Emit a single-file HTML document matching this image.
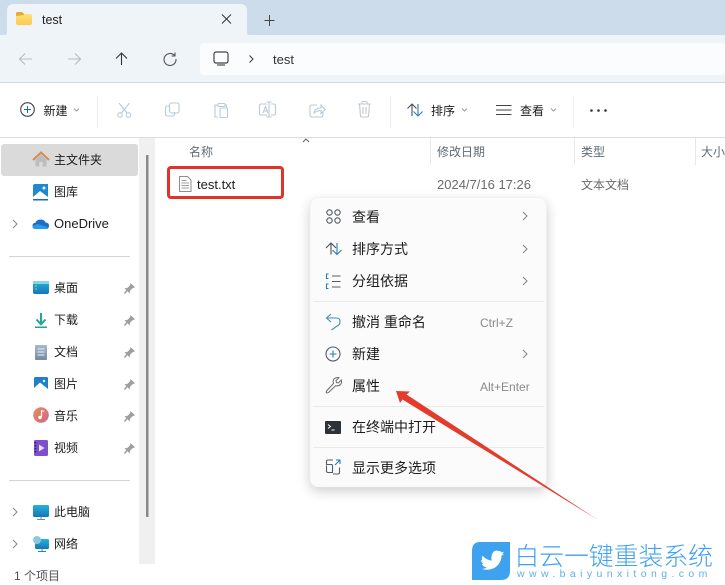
<!DOCTYPE html>
<html><head><meta charset="utf-8"><style>
html,body{margin:0;padding:0;background:#fff;width:725px;height:585px;overflow:hidden}
svg{display:block;font-family:"Liberation Sans","Noto Sans CJK SC",sans-serif}
.s{font-size:12px;fill:#1c1c1c}
.m{font-size:14px;fill:#1c1c1c}
.h{font-size:12px;fill:#5f6b75}
.g{font-size:12px;fill:#6b6b6b}
.k{font-size:12px;fill:#8a8a8a}
.dis{fill:none;stroke:#b9cbd9;stroke-width:1.1}
</style></head><body>
<svg width="725" height="585" viewBox="0 0 725 585" xmlns="http://www.w3.org/2000/svg">
<defs>
<filter id="sh" x="-15%" y="-15%" width="130%" height="130%"><feGaussianBlur stdDeviation="6"/></filter>
<linearGradient id="fo" x1="0" y1="0" x2="0" y2="1"><stop offset="0" stop-color="#ffe38a"/><stop offset="1" stop-color="#fbc94e"/></linearGradient>
<linearGradient id="bl" x1="0" y1="0" x2="0" y2="1"><stop offset="0" stop-color="#27b3d8"/><stop offset="1" stop-color="#1476b8"/></linearGradient>
<linearGradient id="mu" x1="0" y1="0" x2="1" y2="1"><stop offset="0" stop-color="#ee8f55"/><stop offset="1" stop-color="#c9658f"/></linearGradient>
<linearGradient id="doc" x1="0" y1="0" x2="0" y2="1"><stop offset="0" stop-color="#a9bace"/><stop offset="1" stop-color="#74889f"/></linearGradient>
<g id="pin"><path d="M130.500 283l4.500 4.300-2.300.8-2.700 2.700-.3 2.700-5.200-5.200 2.800-.3 2.700-2.700z" fill="#9a9fa5"/><path d="M127 290.500l-2.500 3" stroke="#9a9fa5" stroke-width="1.500" fill="none"/></g>
<path id="chev" d="M0 0l4 4-4 4" fill="none" stroke="#8a8a8a" stroke-width="1.100"/>
</defs>

<!-- title strip -->
<rect width="725" height="35" fill="#cddcea"/>
<path d="M5 35q2 0 2-3V11q0-7 7-7h226q7 0 7 7v21q0 3 2 3z" fill="#eff4f9"/>
<path d="M16 14q0-2 2-2h4l2 2h6q2 0 2 2v7q0 2-2 2H18q-2 0-2-2z" fill="url(#fo)"/>
<path d="M16 16v-2q0-2 2-2h4l2 2v1z" fill="#e8a92d"/>
<text x="42" y="24" font-size="12.500" fill="#222">test</text>
<path d="M222 14.500l9 9m0-9l-9 9" stroke="#333" stroke-width="1" fill="none"/>
<path d="M269.500 15v11M264.500 20.500h10" stroke="#444" stroke-width="1" fill="none"/>

<!-- nav bar -->
<rect y="35" width="725" height="47" fill="#eff4f9"/>
<rect y="82" width="725" height="1" fill="#d2dae1"/>
<rect x="200" y="43" width="525" height="32" rx="4" fill="#fbfcfe"/>
<path d="M32 59H20M25 53.500L19.500 59l5.500 5.500" fill="none" stroke="#b5bcc3" stroke-width="1.100"/>
<path d="M68 59h12M75 53.500l5.500 5.500-5.500 5.500" fill="none" stroke="#b5bcc3" stroke-width="1.100"/>
<path d="M121.500 65V53M116 58.500l5.500-5.500 5.500 5.500" fill="none" stroke="#333" stroke-width="1.100"/>
<path d="M174.500 55.500a6 6 0 1 0 1.500 3.500M175 52.500v3.500h-3.500" fill="none" stroke="#555" stroke-width="1.100"/>
<rect x="214" y="52" width="14" height="11" rx="2" fill="none" stroke="#444" stroke-width="1.200"/>
<path d="M217 65h8" stroke="#777" stroke-width="1.600"/>
<path d="M249.500 55.500l3.500 3.500-3.500 3.500" fill="none" stroke="#444" stroke-width="1.100"/>
<text x="273" y="64" font-size="13" fill="#333">test</text>

<!-- toolbar -->
<circle cx="27.500" cy="109.500" r="6.800" fill="none" stroke="#3e464d" stroke-width="1.100"/>
<path d="M27.500 106v7M24 109.500h7" stroke="#1a6fb0" stroke-width="1.100"/>
<text x="43.500" y="115" class="s">新建</text>
<path d="M74 108.500l2.500 2.500 2.500-2.500" fill="none" stroke="#9a9a9a" stroke-width="1"/>
<rect x="97" y="96" width="1" height="32" fill="#eceff2"/>
<g class="dis">
<path d="M119 103l8 10M129.500 103l-8 10"/><circle cx="120" cy="115" r="2.300"/><circle cx="128.500" cy="115" r="2.300"/>
<path d="M169.500 106h-2q-2 0-2 2v6q0 2 2 2h5q2 0 2-2v-2"/><rect x="169.500" y="103" width="9.500" height="10" rx="2"/>
<path d="M218 105h-3v12h3M225 105h1.500v3"/><rect x="218" y="103.500" width="7" height="3" rx="1"/><rect x="220" y="108" width="7.500" height="9.500" rx="1"/>
<path d="M267 104h-6q-1.500 0-1.500 1.500v8q0 1.500 1.500 1.500h6M271 104h3q1.500 0 1.500 1.500v8q0 1.500-1.500 1.500h-3M269 102v15M266.500 102h5M266.500 117h5"/>
<path d="M263 113l2.500-6.500 2.500 6.500M264 111h3"/>
<path d="M317 105h-5q-2 0-2 2v8q0 2 2 2h9q2 0 2-2v-3"/><path d="M314 113q1-5 7-5v-3l4 4.500-4 4v-3q-4 0-7 2.500z"/>
<path d="M358 104h13M362 104v-1.500q0-1 1-1h3q1 0 1 1V104M359.500 104l1 12q0 1 1.500 1h5q1.500 0 1.500-1l1-12M363 107v7M366 107v7" stroke="#c2c8cd"/>
</g>
<rect x="390" y="96" width="1" height="32" fill="#eceff2"/>
<path d="M412 116V104M407.500 108.500l4.500-4.500 4.500 4.500" fill="none" stroke="#4a5056" stroke-width="1.100"/>
<path d="M418 104v12M413.500 111.500l4.500 4.500 4.500-4.500" fill="none" stroke="#2e7fb8" stroke-width="1.100"/>
<text x="431" y="115" class="s">排序</text>
<path d="M462 108.500l2.500 2.500 2.500-2.500" fill="none" stroke="#9a9a9a" stroke-width="1"/>
<path d="M496 105.500h15.500M496 110h15.500M496 114.500h15.500" stroke="#444" stroke-width="1"/>
<text x="520" y="115" class="s">查看</text>
<path d="M551 108.500l2.500 2.500 2.500-2.500" fill="none" stroke="#9a9a9a" stroke-width="1"/>
<rect x="573" y="96" width="1" height="32" fill="#eceff2"/>
<circle cx="591.500" cy="110.500" r="1.300" fill="#333"/><circle cx="598.500" cy="110.500" r="1.300" fill="#333"/><circle cx="605.500" cy="110.500" r="1.300" fill="#333"/>
<rect y="137" width="725" height="1" fill="#d8dde2"/>

<!-- sidebar -->
<rect x="1" y="144" width="137" height="32" rx="3" fill="#dadada"/>
<rect x="139" y="138" width="16" height="426" fill="#f0f0f0"/>
<rect x="146" y="155" width="2.500" height="362" fill="#8a8a8a"/>

<path d="M33 160l8-7.500 8 7.500" fill="none" stroke="#d98b4b" stroke-width="2"/>
<path d="M35.500 159.500v7h3.800v-4.500h3.400v4.500h3.800v-7l-5.500-5z" fill="#b9bec4"/>
<text x="54" y="164" class="s">主文件夹</text>

<path d="M33 186q0-2 2-2h13v15H35q-2 0-2-2z" fill="#1e88d2"/>
<path d="M33 197l7-6 8 6v2H35q-2 0-2-2z" fill="#fff"/><path d="M33 199h15v1.500H33z" fill="#1a6ea8"/>
<circle cx="44" cy="188" r="1.500" fill="#fff"/>
<text x="54" y="196" class="s">图库</text>

<use href="#chev" x="13" y="220"/>
<path d="M36 229q-3.500 0-3.500-3t3-3.200q1-3.300 5-3.300t5 3q3.500 0 3.500 3.300t-3 3.200z" fill="#1a6fc4"/>
<path d="M36 229q-3.500 0-3.500-3l5-2 10 3-1 2z" fill="#2a9be6"/>
<text x="54" y="228" font-size="13" fill="#1c1c1c">OneDrive</text>

<rect x="9" y="256" width="121" height="1" fill="#d5d5d5"/>

<rect x="33" y="281" width="16" height="13" rx="2" fill="url(#bl)"/>
<rect x="33" y="281" width="16" height="3" fill="#8bd3e8"/>
<path d="M35.500 286h1M35.500 289h1" stroke="#dff" stroke-width="1"/>
<text x="54" y="292" class="s">桌面</text>
<use href="#pin"/>

<path d="M41 313v11M36.500 319.500l4.500 4.800 4.500-4.800" fill="none" stroke="#1fa88c" stroke-width="2"/>
<rect x="35" y="326.500" width="12" height="1.500" fill="#1fa88c"/>
<text x="54" y="324" class="s">下载</text>
<use href="#pin" y="32"/>

<rect x="35" y="345" width="12" height="15" rx="1" fill="url(#doc)"/>
<path d="M37.500 349h7M37.500 352h7M37.500 355h7" stroke="#eef" stroke-width="1"/>
<text x="54" y="356" class="s">文档</text>
<use href="#pin" y="64"/>

<rect x="34" y="377" width="14" height="14" rx="1.500" fill="#1e80cc"/>
<path d="M34 388l6-5.500 8 6.500v2H34z" fill="#fff"/><circle cx="44" cy="381" r="1.200" fill="#fff"/>
<text x="54" y="388" class="s">图片</text>
<use href="#pin" y="96"/>

<circle cx="41" cy="415" r="7.800" fill="url(#mu)"/>
<path d="M41.500 410.500v6.500" stroke="#fff" stroke-width="1.200"/><circle cx="40" cy="417.500" r="1.700" fill="#fff"/><path d="M41.500 410.500l2.500 1" stroke="#fff" stroke-width="1.200"/>
<text x="54" y="420" class="s">音乐</text>
<use href="#pin" y="128"/>

<rect x="34" y="440" width="14" height="16" rx="1.500" fill="#7f4fc9"/>
<path d="M39 444.500l5.500 3.500-5.500 3.500z" fill="#e9ddff"/>
<path d="M35.500 442v12" stroke="#2f1c5c" stroke-width="1.400" stroke-dasharray="1.500 1.500"/>
<text x="54" y="452" class="s">视频</text>
<use href="#pin" y="160"/>

<rect x="9" y="480" width="121" height="1" fill="#d5d5d5"/>

<use href="#chev" x="13" y="508"/>
<rect x="33" y="505" width="16" height="12" rx="1.500" fill="url(#bl)"/>
<path d="M41 517v2.500M37 519.500h8" stroke="#6f8ea5" stroke-width="1"/>
<text x="54" y="516" class="s">此电脑</text>

<use href="#chev" x="13" y="540"/>
<rect x="35" y="539" width="14" height="10" rx="1.500" fill="url(#bl)"/>
<circle cx="37" cy="540" r="4" fill="#8fc7e0"/>
<path d="M42 549v2M38 551.500h8" stroke="#3b7fa5" stroke-width="1"/>
<text x="54" y="548" class="s">网络</text>

<text x="14" y="580" class="h" style="fill:#4d5257">1 个项目</text>

<!-- header row -->
<text x="189" y="156" class="h">名称</text>
<path d="M303 142l3-3 3 3" fill="none" stroke="#666" stroke-width="1"/>
<rect x="430" y="138" width="1" height="27" fill="#e6e9ec"/>
<rect x="574" y="138" width="1" height="27" fill="#e6e9ec"/>
<rect x="695" y="138" width="1" height="27" fill="#e6e9ec"/>
<text x="437" y="156" class="h">修改日期</text>
<text x="581" y="156" class="h">类型</text>
<text x="701" y="156" class="h">大小</text>

<!-- file row -->
<path d="M179.500 176.500h8l3.500 3.500v11.500h-11.500z" fill="#fbfbfb" stroke="#8f8f8f" stroke-width="1"/>
<path d="M181.500 180.500h5M181.500 183h7.500M181.500 185.500h7.500M181.500 188h7.500" stroke="#a0a0a0" stroke-width="1"/>
<text x="197" y="189" font-size="13" fill="#1c1c1c">test.txt</text>
<rect x="168.500" y="167.500" width="114" height="30" rx="2.500" fill="none" stroke="#e0342b" stroke-width="3"/>
<text x="437" y="189" font-size="13" fill="#6b6b6b">2024/7/16 17:26</text>
<text x="581" y="189" class="g">文本文档</text>

<!-- context menu -->
<rect x="310" y="202" width="237" height="289" rx="8" fill="#000" opacity=".2" filter="url(#sh)"/>
<rect x="310" y="197.500" width="236.500" height="289.500" rx="8" fill="#fbfbfc" stroke="#eceef0" stroke-width=".6"/>

<g fill="none" stroke="#555c63" stroke-width="1.100">
<circle cx="329.500" cy="212.500" r="2.700"/><circle cx="337.500" cy="212.500" r="2.700"/><circle cx="329.500" cy="220.500" r="2.700"/><circle cx="337.500" cy="220.500" r="2.700"/>
<path d="M331 254.500v-11M326 248l5-5 5 5" stroke="#4a5056"/>
<path d="M337 243v11.500M332.500 250l4.500 4.500 4.500-4.500" stroke="#2e7fb8"/>
<path d="M332 276h8.500M332 281.500h8.500M332 287h8.500"/>
<path d="M328.500 274h-2v4.500h2M328.500 284h-2v4.500h2" stroke="#2e7fb8"/>
<path d="M327 318h9.500q3.500 0 3.500 3.500t-3 4.500l-5.500 4" stroke="#3f8fb8"/>
<path d="M331 314l-4.500 4 4.500 4" stroke="#3f8fb8"/>
<circle cx="333" cy="354" r="7"/><path d="M333 350.500v7M329.500 354h7" stroke="#2e7fb8"/>
<path d="M326.500 391l7-7.500q-1-3.500 1-5t4.500-.8l-3 3 .4 1.900 1.900.4 3-3q.8 2.700-.8 4.500t-5 1.300l-7 6.700q-1.500 1-2.300-.2z" stroke="#6a6a6a" stroke-width="1"/>
<path d="M333 460h-5q-1.500 0-1.500 1.500v3h5q1 0 1 1v7h-4.500q-1.500 0-1.500-1.500v-5.500M333 474h5q1.500 0 1.500-1.500v-5"/>
<path d="M335 465l5-5M336 460h4v4" stroke="#2e7fb8"/>
</g>
<rect x="325" y="421" width="16" height="13" rx="1" fill="#2c3238"/>
<path d="M328 424.500l2.500 2-2.500 2M331.500 430h3" stroke="#fff" stroke-width="1" fill="none"/>

<text x="352" y="222" class="m">查看</text>
<text x="352" y="254" class="m">排序方式</text>
<text x="352" y="286" class="m">分组依据</text>
<text x="352" y="327" class="m">撤消 重命名</text>
<text x="352" y="359" class="m">新建</text>
<text x="352" y="391" class="m">属性</text>
<text x="352" y="432" class="m">在终端中打开</text>
<text x="352" y="473" class="m">显示更多选项</text>
<text x="480" y="327" class="k">Ctrl+Z</text>
<text x="480" y="391" class="k">Alt+Enter</text>
<use href="#chev" x="523" y="212"/>
<use href="#chev" x="523" y="245"/>
<use href="#chev" x="523" y="277"/>
<use href="#chev" x="523" y="350"/>
<rect x="313" y="301" width="231" height="1" fill="#e9e9ea"/>
<rect x="313" y="406" width="231" height="1" fill="#e9e9ea"/>
<rect x="313" y="447" width="231" height="1" fill="#e9e9ea"/>

<!-- red arrow -->
<path d="M396 391L410 391.500L406.500 394.500L598 520L402.500 399.500L400 403z" fill="#e33b2c"/>

<!-- logo -->
<path d="M480 542h30v29q0 9-9 9h-29v-29q0-9 8-9z" fill="#3fa2ef"/>
<g transform="translate(492.500 561.500) scale(.82) translate(-490 -562)">
<path d="M478 555q4 5 11 6-1-5 1-9t7-3q3 0 4 2l3-1-2 3 2 0-3 2q0 7-5 12t-13 5q-3 0-6-1 4 0 6-2-4 0-6-4h2q-3-2-3-5l2 1q-2-3 0-6z" fill="#fff"/>
</g>
<text x="514.500" y="565" font-size="24.800" fill="#3fa2ef" style="font-weight:300">白云一键重装系统</text>
<text x="517" y="577" font-size="10.500" fill="#5cb0ee" letter-spacing="4.400">www.baiyunxitong.com</text>
</svg>
</body></html>
